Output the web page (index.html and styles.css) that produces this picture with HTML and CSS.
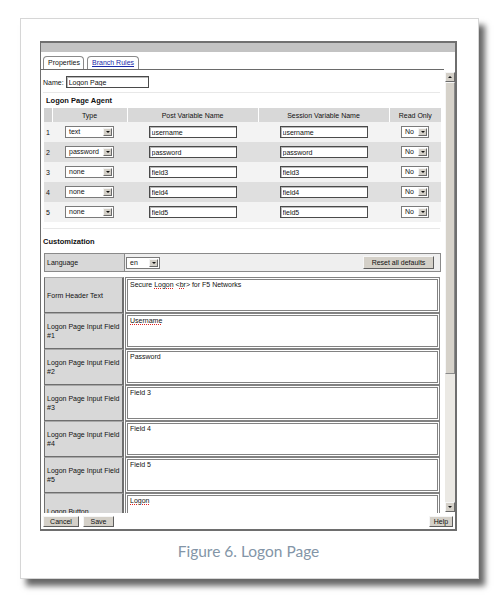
FILE: index.html
```html
<!DOCTYPE html>
<html>
<head>
<meta charset="utf-8">
<title>Figure 6. Logon Page</title>
<link rel="stylesheet" href="styles.css">
</head>
<body>
<div class="card">
  <div class="window">
    <div class="titlebar"></div>
    <div class="tabs">
      <div class="tab active">Properties</div>
      <div class="tab"><a class="link">Branch Rules</a></div>
    </div>
    <div class="main">
      <div class="pane">
        <div class="name-row"><span class="lbl">Name:</span><input class="txt name" value="Logon Page"></div>
        <div class="rule"></div>
        <div class="section agent-title">Logon Page Agent</div>
        <table class="agent">
          <thead>
            <tr><th class="c-num"></th><th class="c-type">Type</th><th class="c-post">Post Variable Name</th><th class="c-sess">Session Variable Name</th><th class="c-ro">Read Only</th></tr>
          </thead>
          <tbody>
            <tr class="odd"><td class="num">1</td><td><span class="sel type"><span class="val">text</span><span class="btn"></span></span></td><td><input class="txt var" value="username"></td><td><input class="txt var" value="username"></td><td><span class="sel ro"><span class="val">No</span><span class="btn"></span></span></td></tr>
            <tr class="even"><td class="num">2</td><td><span class="sel type"><span class="val">password</span><span class="btn"></span></span></td><td><input class="txt var" value="password"></td><td><input class="txt var" value="password"></td><td><span class="sel ro"><span class="val">No</span><span class="btn"></span></span></td></tr>
            <tr class="odd"><td class="num">3</td><td><span class="sel type"><span class="val">none</span><span class="btn"></span></span></td><td><input class="txt var" value="field3"></td><td><input class="txt var" value="field3"></td><td><span class="sel ro"><span class="val">No</span><span class="btn"></span></span></td></tr>
            <tr class="even"><td class="num">4</td><td><span class="sel type"><span class="val">none</span><span class="btn"></span></span></td><td><input class="txt var" value="field4"></td><td><input class="txt var" value="field4"></td><td><span class="sel ro"><span class="val">No</span><span class="btn"></span></span></td></tr>
            <tr class="odd"><td class="num">5</td><td><span class="sel type"><span class="val">none</span><span class="btn"></span></span></td><td><input class="txt var" value="field5"></td><td><input class="txt var" value="field5"></td><td><span class="sel ro"><span class="val">No</span><span class="btn"></span></span></td></tr>
          </tbody>
        </table>
        <div class="rule rule2"></div>
        <div class="section cust-title">Customization</div>
        <div class="lang-row">
          <div class="lab">Language</div>
          <div class="lang-val">
            <span class="sel lang"><span class="val">en</span><span class="btn"></span></span>
            <span class="button reset">Reset all defaults</span>
          </div>
        </div>
        <div class="cust">
          <div class="crow"><div class="lab">Form Header Text</div><div class="ta">Secure <span class="sp">Logon</span> &lt;<span class="sp">br</span>&gt; for F5 Networks</div></div>
          <div class="crow"><div class="lab">Logon Page Input Field #1</div><div class="ta"><span class="sp">Username</span></div></div>
          <div class="crow"><div class="lab">Logon Page Input Field #2</div><div class="ta">Password</div></div>
          <div class="crow"><div class="lab">Logon Page Input Field #3</div><div class="ta">Field 3</div></div>
          <div class="crow"><div class="lab">Logon Page Input Field #4</div><div class="ta">Field 4</div></div>
          <div class="crow"><div class="lab">Logon Page Input Field #5</div><div class="ta">Field 5</div></div>
          <div class="crow"><div class="lab">Logon Button</div><div class="ta"><span class="sp">Logon</span></div></div>
        </div>
      </div>
      <div class="scrollbar">
        <div class="arrow up"></div>
        <div class="thumb"></div>
        <div class="track"></div>
        <div class="arrow down"></div>
      </div>
    </div>
    <div class="btnbar">
      <span class="button cancel">Cancel</span>
      <span class="button save">Save</span>
      <span class="spacer"></span>
      <span class="button help">Help</span>
    </div>
  </div>
  <div class="caption">Figure 6. Logon Page</div>
</div>
</body>
</html>
```

FILE: styles.css
```css
* { box-sizing: border-box; }
html, body { margin: 0; padding: 0; background: #ffffff; }
body {
  width: 499px;
  height: 600px;
  overflow: hidden;
  font-family: "Liberation Sans", Arial, sans-serif;
  font-size: 7px;
  color: #111;
}
.card {
  margin: 18px 0 0 20px;
  width: 459px;
  height: 561px;
  border: 1px solid #d6d6d6;
  background: #fff;
  box-shadow: 6px 7px 6px rgba(0, 0, 0, 0.6);
  padding: 22px 21px 0 19px;
}
.window {
  width: 417px;
  height: 490px;
  border-left: 1px solid #6e6e6e;
  border-right: 2px solid #6e6e6e;
  border-bottom: 2px solid #6e6e6e;
  display: flex;
  flex-direction: column;
  background: #fff;
}
.titlebar {
  height: 11px;
  flex: none;
  background: #c3c3c3;
  border-top: 2px solid #707070;
}
.tabs {
  height: 18px;
  flex: none;
  display: flex;
  align-items: flex-end;
  gap: 3px;
  padding-left: 2px;
  margin-right: 11px;
  border-bottom: 1px solid #6a6a6a;
}
.tab {
  height: 13px;
  line-height: 12px;
  padding: 0 4px;
  border: 1px solid #8a8a8a;
  border-bottom: none;
  border-radius: 4px 4px 0 0;
  background: #fff;
  white-space: nowrap;
}
.tab.active { width: 41px; }
.tab .link { color: #1c2aa8; text-decoration: underline; }
.main {
  height: 443px;
  flex: none;
  display: flex;
}
.pane {
  flex: 1;
  overflow: hidden;
  padding-left: 2px;
}
.name-row {
  margin-top: 6px;
  height: 12px;
  display: flex;
  align-items: center;
  gap: 2px;
}
.txt {
  font-family: "Liberation Sans", Arial, sans-serif;
  font-size: 7px;
  color: #111;
  height: 12px;
  padding: 0 2px;
  margin: 0;
  border: 1px solid #4a4a4a;
  box-shadow: inset 1px 1px 0 #b8b8b8;
  background: #fff;
  outline: none;
}
.name { width: 83px; }
.rule {
  margin-top: 4px;
  margin-right: 5px;
  height: 1px;
  background: #e8e8e8;
}
.section {
  font-weight: bold;
  font-size: 7.5px;
  line-height: 10px;
}
.agent-title { margin-top: 3px; padding-left: 3px; }
.agent {
  margin-top: 2px;
  margin-left: 1px;
  width: 397px;
  border-collapse: collapse;
  table-layout: fixed;
}
.agent th {
  height: 14px;
  padding: 0;
  font-weight: normal;
  background: #d8d8d8;
  border-left: 1px solid #fff;
  text-align: center;
}
.agent th:first-child { border-left: none; background: #d0d0d0; }
.c-num { width: 8px; }
.c-type { width: 75px; }
.c-post { width: 131px; }
.c-sess { width: 131px; }
.c-ro { width: 52px; }
.agent td {
  height: 20px;
  padding: 0;
  text-align: center;
  vertical-align: middle;
}
.agent td.num { text-align: left; padding-left: 2px; }
.agent tr.odd td { background: #f3f3f3; }
.agent tr.even td { background: #dfdfdf; }
.var { width: 88px; }
.sel {
  display: inline-flex;
  align-items: stretch;
  height: 12px;
  border: 1px solid #7a7a7a;
  background: #fff;
  vertical-align: middle;
  text-align: left;
}
.sel .val {
  flex: 1;
  line-height: 10px;
  padding-left: 3px;
  white-space: nowrap;
  overflow: hidden;
}
.sel .btn {
  width: 9px;
  margin: 1px;
  background: #d4d0c8;
  border: 1px solid;
  border-color: #f4f4f4 #6a6a6a #6a6a6a #f4f4f4;
  display: flex;
  align-items: center;
  justify-content: center;
}
.sel .btn::after {
  content: "";
  width: 0;
  height: 0;
  border-left: 2px solid transparent;
  border-right: 2px solid transparent;
  border-top: 2px solid #111;
}
.type { width: 49px; }
.ro { width: 28px; }
.lang { width: 34px; }
.rule2 { margin-top: 6px; }
.cust-title { margin-top: 8px; }
.lang-row {
  margin-top: 6px;
  margin-left: 1px;
  width: 397px;
  height: 19px;
  display: grid;
  grid-template-columns: 80px 1fr;
  border: 1px solid #8a8a8a;
}
.lab {
  background: #d8d8d8;
  border-right: 1px solid #8a8a8a;
  display: flex;
  align-items: center;
  padding-left: 2px;
  line-height: 9px;
}
.lang-val {
  background: #efefef;
  display: flex;
  align-items: center;
  justify-content: space-between;
  padding: 0 6px 0 1px;
}
.button {
  display: inline-flex;
  align-items: center;
  justify-content: center;
  background: #d4d0c8;
  border: 1px solid;
  border-color: #f6f6f6 #5e5e5e #5e5e5e #f6f6f6;
  white-space: nowrap;
}
.reset { width: 71px; height: 13px; }
.cust {
  margin-top: 5px;
  margin-left: 1px;
  width: 397px;
  display: flex;
  flex-direction: column;
}
.crow {
  height: 36px;
  flex: none;
  display: grid;
  grid-template-columns: 80px 1fr;
}
.crow .lab {
  border: 1px solid #6f6f6f;
  border-top-color: #a8a8a8;
  border-right: 2px solid #6f6f6f;
}
.ta {
  margin: 0 1px 0 1px;
  border: 3px double #828282;
  background: #fff;
  padding: 0 2px;
  line-height: 9px;
  white-space: nowrap;
}
.sp {
  text-decoration: underline dotted #d22;
  text-decoration-thickness: 1px;
  text-underline-offset: 1px;
}
.scrollbar {
  width: 10px;
  flex: none;
  margin: 2px 0 1px 0;
  display: flex;
  flex-direction: column;
  background: #ebe9e4;
}
.arrow {
  height: 10px;
  flex: none;
  background: #d4d0c8;
  border: 1px solid;
  border-color: #f6f6f6 #6a6a6a #6a6a6a #f6f6f6;
  display: flex;
  align-items: center;
  justify-content: center;
}
.arrow::after {
  content: "";
  width: 0;
  height: 0;
  border-left: 2px solid transparent;
  border-right: 2px solid transparent;
}
.arrow.up::after { border-bottom: 2px solid #111; }
.arrow.down::after { border-top: 2px solid #111; }
.thumb {
  height: 292px;
  flex: none;
  background: #d6d2ca;
  border: 1px solid;
  border-color: #f6f6f6 #8a8a8a #8a8a8a #f6f6f6;
}
.track { flex: 1; }
.btnbar {
  height: 16px;
  flex: none;
  display: flex;
  align-items: flex-start;
  gap: 4px;
  padding: 3px 2px 0 2px;
}
.btnbar .button { height: 11px; }
.cancel { width: 36px; }
.save { width: 31px; }
.help { width: 24px; }
.spacer { flex: 1; }
.caption {
  margin-top: 10px;
  text-align: center;
  font-family: Lato, "Liberation Sans", sans-serif;
  font-size: 15.5px;
  line-height: 20px;
  color: #8395a7;
}
```
